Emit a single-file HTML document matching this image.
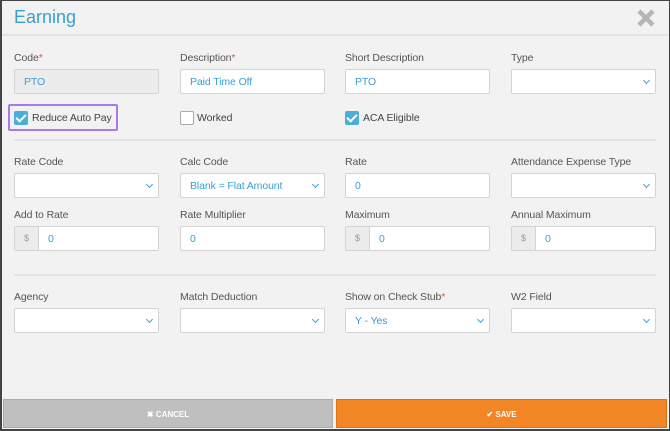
<!DOCTYPE html>
<html><head><style>
*{box-sizing:border-box;margin:0;padding:0}
body{width:670px;height:431px;background:#f2f2f2;font-family:"Liberation Sans",sans-serif;position:relative;overflow:hidden}
.frame{position:absolute;left:0;top:0;width:670px;height:431px;border:1px solid #444;border-left-width:2px;border-bottom-width:2px}
.title{position:absolute;left:14px;top:7px;font-size:18px;color:#3a9fd0}
.close{position:absolute;left:636px;top:8px}
.hline{position:absolute;height:2px;background:#e2e2e2}
.lbl{position:absolute;font-size:10.5px;color:#555;letter-spacing:-0.1px}
.req{color:#e0504a}
.inp{position:absolute;height:25px;width:145px;background:#fff;border:1px solid #d3d3d3;border-radius:2px;font-size:10.5px;color:#3a9fd0;padding:6px 9px;letter-spacing:-0.1px}
.dis{background:#ececec}
.sel::after{content:"";position:absolute;right:6px;top:8px;width:4px;height:4px;border-right:1.5px solid #3a9fd0;border-bottom:1.5px solid #3a9fd0;transform:rotate(45deg)}
.pre{padding-left:33px}
.pre span{position:absolute;left:0;top:0;width:24px;height:23px;background:#ececec;border-right:1px solid #d3d3d3;color:#999;font-size:9px;text-align:center;line-height:23px}
.cb{position:absolute;width:14px;height:14px;border-radius:2px}
.cbon{background:#4aaed9}
.cboff{background:#fff;border:1px solid #aaa}
.cbon::after{content:"";position:absolute;left:4px;top:1px;width:4px;height:8px;border-right:2px solid #fff;border-bottom:2px solid #fff;transform:rotate(45deg)}
.cbl{position:absolute;font-size:10.5px;color:#444;letter-spacing:-0.1px}
.btn{position:absolute;top:399px;height:29px;font-size:8px;color:#fff;text-align:center;line-height:29px;font-weight:bold}
</style></head><body>
<div class="frame"></div>
<div class="title">Earning</div>
<svg class="close" width="20" height="20" viewBox="0 0 20 20"><path d="M3 3L17 17M17 3L3 17" stroke="#b5b5b5" stroke-width="4.5" stroke-linecap="butt"/></svg>
<div class="hline" style="left:2px;top:34px;width:666px"></div>

<div class="lbl" style="left:14px;top:52px">Code<span class="req">*</span></div>
<div class="lbl" style="left:180px;top:52px">Description<span class="req">*</span></div>
<div class="lbl" style="left:345px;top:52px">Short Description</div>
<div class="lbl" style="left:511px;top:52px">Type</div>
<div class="inp dis" style="left:14px;top:69px">PTO</div>
<div class="inp" style="left:180px;top:69px">Paid Time Off</div>
<div class="inp" style="left:345px;top:69px">PTO</div>
<div class="inp sel" style="left:511px;top:69px"></div>

<div style="position:absolute;left:8px;top:104px;width:110px;height:27px;border:2px solid #a779e9;border-radius:2px"></div>
<div class="cb cbon" style="left:14px;top:111px"></div><div class="cbl" style="left:32px;top:112px">Reduce Auto Pay</div>
<div class="cb cboff" style="left:180px;top:111px"></div><div class="cbl" style="left:197px;top:112px">Worked</div>
<div class="cb cbon" style="left:345px;top:111px"></div><div class="cbl" style="left:363px;top:112px">ACA Eligible</div>

<div class="hline" style="left:14px;top:139px;width:642px"></div>

<div class="lbl" style="left:14px;top:156px">Rate Code</div>
<div class="lbl" style="left:180px;top:156px">Calc Code</div>
<div class="lbl" style="left:345px;top:156px">Rate</div>
<div class="lbl" style="left:511px;top:156px">Attendance Expense Type</div>
<div class="inp sel" style="left:14px;top:173px"></div>
<div class="inp sel" style="left:180px;top:173px">Blank = Flat Amount</div>
<div class="inp" style="left:345px;top:173px">0</div>
<div class="inp sel" style="left:511px;top:173px"></div>

<div class="lbl" style="left:14px;top:209px">Add to Rate</div>
<div class="lbl" style="left:180px;top:209px">Rate Multiplier</div>
<div class="lbl" style="left:345px;top:209px">Maximum</div>
<div class="lbl" style="left:511px;top:209px">Annual Maximum</div>
<div class="inp pre" style="left:14px;top:226px"><span>$</span>0</div>
<div class="inp" style="left:180px;top:226px">0</div>
<div class="inp pre" style="left:345px;top:226px"><span>$</span>0</div>
<div class="inp pre" style="left:511px;top:226px"><span>$</span>0</div>

<div class="hline" style="left:14px;top:274px;width:642px"></div>

<div class="lbl" style="left:14px;top:291px">Agency</div>
<div class="lbl" style="left:180px;top:291px">Match Deduction</div>
<div class="lbl" style="left:345px;top:291px">Show on Check Stub<span class="req">*</span></div>
<div class="lbl" style="left:511px;top:291px">W2 Field</div>
<div class="inp sel" style="left:14px;top:308px"></div>
<div class="inp sel" style="left:180px;top:308px"></div>
<div class="inp sel" style="left:345px;top:308px">Y - Yes</div>
<div class="inp sel" style="left:511px;top:308px"></div>

<div class="btn" style="left:3px;width:330px;background:#bfbfbf;border:1px solid #aaa">✖ CANCEL</div>
<div class="btn" style="left:336px;width:331px;background:#f28524;border:1px solid #e07010">✔ SAVE</div>
</body></html>
